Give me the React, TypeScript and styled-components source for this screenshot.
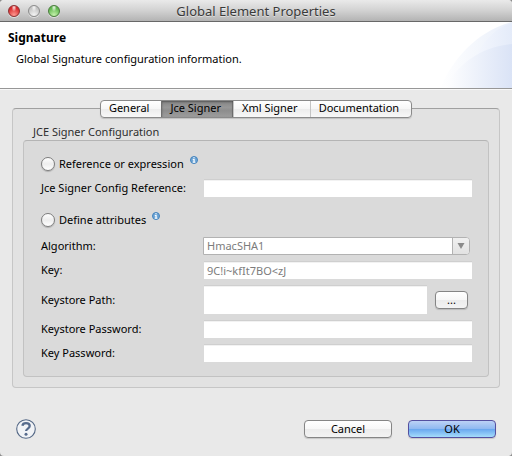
import React, { useState } from "react";
import styled, { createGlobalStyle, css } from "styled-components";

const GlobalStyle = createGlobalStyle`
  *, *::before, *::after { box-sizing: border-box; }
  body {
    margin: 0;
    background: #8c8c8c;
    color: #000;
    font: 11px/16px "Lucida Grande", "Noto Sans", "Open Sans", sans-serif;
  }
  button, input, select { font: inherit; color: inherit; margin: 0; }
`;

const Window = styled.main`
  display: flex;
  flex-direction: column;
  min-height: 100vh;
  background: #e9e9e9;
  border-radius: 4px;
  overflow: hidden;
`;

const TitleBar = styled.header`
  display: grid;
  grid-template-columns: 1fr auto 1fr;
  align-items: center;
  height: 22px;
  padding: 0 8px;
  background: linear-gradient(#eaeaea, #d2d2d2 50%, #b3b3b3);
  border-bottom: 1px solid #686868;
`;

const WindowButtons = styled.div`
  display: flex;
  gap: 8px;
`;

const lightColors = {
  close: ["#ff9a92", "#d82a2c", "#8c3032"],
  minimize: ["#f4f4f4", "#c4c4c4", "#8c8c8c"],
  zoom: ["#c5f2ac", "#62b850", "#497c3c"],
};

const Light = styled.button<{ $kind: keyof typeof lightColors }>`
  width: 12px;
  height: 12px;
  padding: 0;
  border-radius: 50%;
  border: 1px solid ${(p) => lightColors[p.$kind][2]};
  background:
    radial-gradient(ellipse at 50% 15%, rgba(255, 255, 255, 0.9), rgba(255, 255, 255, 0) 35%),
    radial-gradient(circle at 50% 90%, ${(p) => lightColors[p.$kind][0]}, ${(p) => lightColors[p.$kind][1]} 70%);
  box-shadow: 0 1px 0 rgba(255, 255, 255, 0.5);
`;

const WindowTitle = styled.h1`
  margin: 0;
  font-size: 13px;
  font-weight: 400;
  line-height: 20px;
  color: #3a3a3a;
  text-shadow: 0 1px 0 rgba(255, 255, 255, 0.5);
`;

const Banner = styled.section`
  display: flex;
  justify-content: space-between;
  height: 67px;
  background: #fff;
  border-bottom: 1px solid #979797;
`;

const BannerText = styled.div`
  padding: 8px;
`;

const BannerTitle = styled.h2`
  margin: 0 0 5px;
  font-size: 12px;
  line-height: 16px;
  font-weight: 700;
`;

const BannerMessage = styled.p`
  margin: 0;
  padding-left: 8px;
`;

const BannerArt = styled.svg`
  display: block;
  width: 76px;
  height: 66px;
`;

const Content = styled.div`
  display: flex;
  flex-direction: column;
  align-items: stretch;
  padding: 10px 12px 0;
  border-top: 1px solid #f8f8f8;
`;

const TabList = styled.div`
  display: flex;
  align-self: center;
  height: 18px;
  z-index: 1;
  border: 1px solid #8a8a8a;
  border-radius: 4px;
  overflow: hidden;
  background: linear-gradient(#fff, #f6f6f6 50%, #ececec 51%, #f8f8f8);
  box-shadow: 0 1px 1px rgba(0, 0, 0, 0.15);
`;

const Tab = styled.button<{ $selected: boolean }>`
  height: 16px;
  padding: 0 12px 2px 8px;
  border: 0;
  border-left: 1px solid #c4c4c4;
  background: transparent;
  line-height: 14px;
  &:first-child { border-left: 0; }
  ${(p) =>
    p.$selected &&
    css`
      border-left-color: #707070;
      background: linear-gradient(#858585, #979797 40%, #8d8d8d 60%, #9d9d9d);
      box-shadow: inset 0 1px 2px rgba(0, 0, 0, 0.35), inset -1px 0 0 #777;
    `}
`;

const TabPane = styled.div`
  margin-top: -10px;
  padding: 15px 10px 10px;
  background: #e2e2e2;
  border: 1px solid #c6c6c6;
  border-top-color: #a0a0a0;
  border-radius: 4px;
`;

const Group = styled.fieldset`
  min-width: 0;
  margin: 0;
  padding: 0;
  border: 0;
`;

const GroupTitle = styled.legend`
  padding: 0 10px 1px;
  line-height: 15px;
  color: #2e2e2e;
`;

const GroupBody = styled.div`
  display: grid;
  gap: 15px;
  padding: 15px 16px 14px 17px;
  background: #dadada;
  border: 1px solid #c2c2c2;
  border-top-color: #b4b4b4;
  border-radius: 4px;
`;

const OptionSection = styled.div<{ $gap: number }>`
  display: grid;
  gap: ${(p) => p.$gap}px;
`;

const OptionRow = styled.div`
  display: flex;
  align-items: center;
  height: 18px;
`;

const OptionLabel = styled.label`
  display: flex;
  align-items: center;
  gap: 4px;
  padding-bottom: 2px;
`;

const Radio = styled.input`
  appearance: none;
  width: 14px;
  height: 14px;
  border: 1px solid #7d7d7d;
  border-radius: 50%;
  background: linear-gradient(#fff, #ededed 50%, #fff);
  box-shadow: 0 1px 1px rgba(0, 0, 0, 0.2);
  &:checked { background: radial-gradient(circle, #333 30%, #f4f4f4 35%); }
`;

const InfoButton = styled.button`
  display: flex;
  align-self: flex-start;
  padding: 0;
  margin-left: 6px;
  border: 0;
  background: none;
`;

const FieldRow = styled.div`
  display: grid;
  grid-template-columns: 163px 1fr;
  align-items: center;
`;

const FieldLabel = styled.label`
  padding-bottom: 2px;
  line-height: 15px;
`;

const TextField = styled.input<{ $tall?: boolean }>`
  width: 100%;
  min-width: 0;
  height: ${(p) => (p.$tall ? 28 : 17)}px;
  padding: 0 3px;
  border: 0;
  border-radius: 0;
  outline: 0;
  background: #fff;
  box-shadow: 0 -1px 0 #cfcfcf, inset 0 1px 0 #f2f2f2;
  &:disabled { color: #7c7c7c; }
`;

const PathControls = styled.div`
  display: flex;
  align-items: center;
  gap: 8px;
  padding-right: 4px;
`;

const Combo = styled.div`
  display: grid;
  grid-template-columns: 1fr 17px;
  height: 18px;
  margin-left: -1px;
  margin-right: 2px;
  overflow: hidden;
  border: 1px solid #b2b2b2;
  border-radius: 0 4px 4px 0;
  background: #fff;
`;

const ComboSelect = styled.select`
  appearance: none;
  min-width: 0;
  height: 16px;
  padding: 0 3px;
  border: 0;
  background: transparent;
  line-height: 16px;
  &:disabled { color: #7c7c7c; opacity: 1; }
`;

const ComboArrow = styled.span`
  display: grid;
  place-items: center;
  border-left: 1px solid #b2b2b2;
  background: linear-gradient(#f0f0f0, #e2e2e2);
  pointer-events: none;
`;

const PushButton = styled.button<{ $variant?: "default" | "small" }>`
  flex: none;
  width: ${(p) => (p.$variant === "small" ? 33 : 88)}px;
  height: 18px;
  padding: 0;
  border: 1px solid #858585;
  border-radius: 4px;
  line-height: 16px;
  background: linear-gradient(#fff, #f7f7f7 50%, #ececec 51%, #f3f3f3);
  box-shadow: 0 1px 1px rgba(0, 0, 0, 0.15);
  ${(p) =>
    p.$variant === "default" &&
    css`
      border-color: #5450a0;
      background: linear-gradient(#bcd2f6, #90b9f1 48%, #6aa8ef 52%, #a4dcfb);
    `}
`;

const Footer = styled.footer`
  display: flex;
  align-items: center;
  gap: 16px;
  margin-top: auto;
  padding: 0 16px 17px;
`;

const HelpButton = styled.button`
  display: flex;
  margin-right: auto;
  padding: 0;
  border: 0;
  background: none;
`;

function InfoIcon() {
  return (
    <svg width="8" height="8" viewBox="0 0 8 8" aria-hidden="true">
      <circle cx="4" cy="4" r="3.5" fill="#6fa6d6" stroke="#4483bd" strokeWidth="1" />
      <path d="M3.3 1.2h1.400v1.100H3.300zM2.800 3h1.900v2.700h.7v1H2.700v-1h.7V3.900h-.6z" fill="#fff" />
    </svg>
  );
}

function HelpIcon() {
  return (
    <svg width="20" height="20" viewBox="0 0 20 20" aria-hidden="true">
      <circle cx="10" cy="10" r="9.3" fill="#f1f3f6" stroke="#546886" strokeWidth="1.1" />
      <path
        d="M6.4 6.7C6.7 4.9 8 4.2 10 4.2c2.300 0 3.700 1.100 3.700 2.900 0 2.600-3.600 2.400-3.600 5"
        fill="none"
        stroke="#566b8c"
        strokeWidth="2.300"
      />
      <circle cx="10" cy="15.300" r="1.500" fill="#566b8c" />
    </svg>
  );
}

const tabs = ["General", "Jce Signer", "Xml Signer", "Documentation"];

function Field({ id, label, children }: { id: string; label: string; children: React.ReactNode }) {
  return (
    <FieldRow>
      <FieldLabel htmlFor={id}>{label}</FieldLabel>
      {children}
    </FieldRow>
  );
}

function ModeOption({ label, value, mode, onPick }: {
  label: string;
  value: string;
  mode: string;
  onPick: (value: string) => void;
}) {
  return (
    <OptionRow>
      <OptionLabel>
        <Radio type="radio" name="mode" value={value} checked={mode === value} onChange={() => onPick(value)} />
        {label}
      </OptionLabel>
      <InfoButton type="button" aria-label={`About ${label}`}>
        <InfoIcon />
      </InfoButton>
    </OptionRow>
  );
}

export default function App() {
  const [tab, setTab] = useState("Jce Signer");
  const [mode, setMode] = useState("");

  return (
    <>
      <GlobalStyle />
      <Window>
        <TitleBar>
          <WindowButtons>
            <Light type="button" $kind="close" aria-label="Close" />
            <Light type="button" $kind="minimize" aria-label="Minimize" />
            <Light type="button" $kind="zoom" aria-label="Zoom" />
          </WindowButtons>
          <WindowTitle>Global Element Properties</WindowTitle>
        </TitleBar>

        <Banner>
          <BannerText>
            <BannerTitle>Signature</BannerTitle>
            <BannerMessage>Global Signature configuration information.</BannerMessage>
          </BannerText>
          <BannerArt viewBox="0 0 76 66" aria-hidden="true">
            <defs>
              <linearGradient id="outer" x1="0" x2="1">
                <stop offset="0" stopColor="#fff" />
                <stop offset="1" stopColor="#e9effa" />
              </linearGradient>
              <linearGradient id="middle" x1="0" x2="1">
                <stop offset="0" stopColor="#f8faff" />
                <stop offset="1" stopColor="#e4ebf9" />
              </linearGradient>
              <linearGradient id="inner" x1="0" x2="1">
                <stop offset="0" stopColor="#fff" />
                <stop offset="1" stopColor="#dae3f6" />
              </linearGradient>
            </defs>
            <path d="M4 66C18 36 40 10 76 0V66z" fill="url(#outer)" />
            <path d="M30 66C38 30 52 8 76 1V66z" fill="url(#middle)" />
            <path d="M8 66C22 42 46 24 76 22V66z" fill="url(#inner)" />
          </BannerArt>
        </Banner>

        <Content>
          <TabList role="tablist">
            {tabs.map((name) => (
              <Tab
                key={name}
                type="button"
                role="tab"
                aria-selected={name === tab}
                $selected={name === tab}
                onClick={() => setTab(name)}
              >
                {name}
              </Tab>
            ))}
          </TabList>

          <TabPane role="tabpanel">
            <Group>
              <GroupTitle>JCE Signer Configuration</GroupTitle>
              <GroupBody>
                <OptionSection $gap={6}>
                  <ModeOption label="Reference or expression" value="reference" mode={mode} onPick={setMode} />
                  <Field id="reference" label="Jce Signer Config Reference:">
                    <TextField id="reference" />
                  </Field>
                </OptionSection>

                <OptionSection $gap={7}>
                  <ModeOption label="Define attributes" value="attributes" mode={mode} onPick={setMode} />
                  <Field id="algorithm" label="Algorithm:">
                    <Combo>
                      <ComboSelect id="algorithm" disabled defaultValue="HmacSHA1">
                        <option>HmacSHA1</option>
                      </ComboSelect>
                      <ComboArrow>
                        <svg width="8" height="6" viewBox="0 0 8 6" aria-hidden="true">
                          <path d="M.5 0h7L4 6z" fill="#8a8a8a" />
                        </svg>
                      </ComboArrow>
                    </Combo>
                  </Field>
                  <Field id="key" label="Key:">
                    <TextField id="key" disabled defaultValue="9C!i~kfIt7BO<zJ" />
                  </Field>
                  <Field id="path" label="Keystore Path:">
                    <PathControls>
                      <TextField id="path" $tall />
                      <PushButton type="button" $variant="small" aria-label="Browse">...</PushButton>
                    </PathControls>
                  </Field>
                  <Field id="keystore-password" label="Keystore Password:">
                    <TextField id="keystore-password" type="password" />
                  </Field>
                  <Field id="key-password" label="Key Password:">
                    <TextField id="key-password" type="password" />
                  </Field>
                </OptionSection>
              </GroupBody>
            </Group>
          </TabPane>
        </Content>

        <Footer>
          <HelpButton type="button" aria-label="Help">
            <HelpIcon />
          </HelpButton>
          <PushButton type="button">Cancel</PushButton>
          <PushButton type="submit" $variant="default">OK</PushButton>
        </Footer>
      </Window>
    </>
  );
}
